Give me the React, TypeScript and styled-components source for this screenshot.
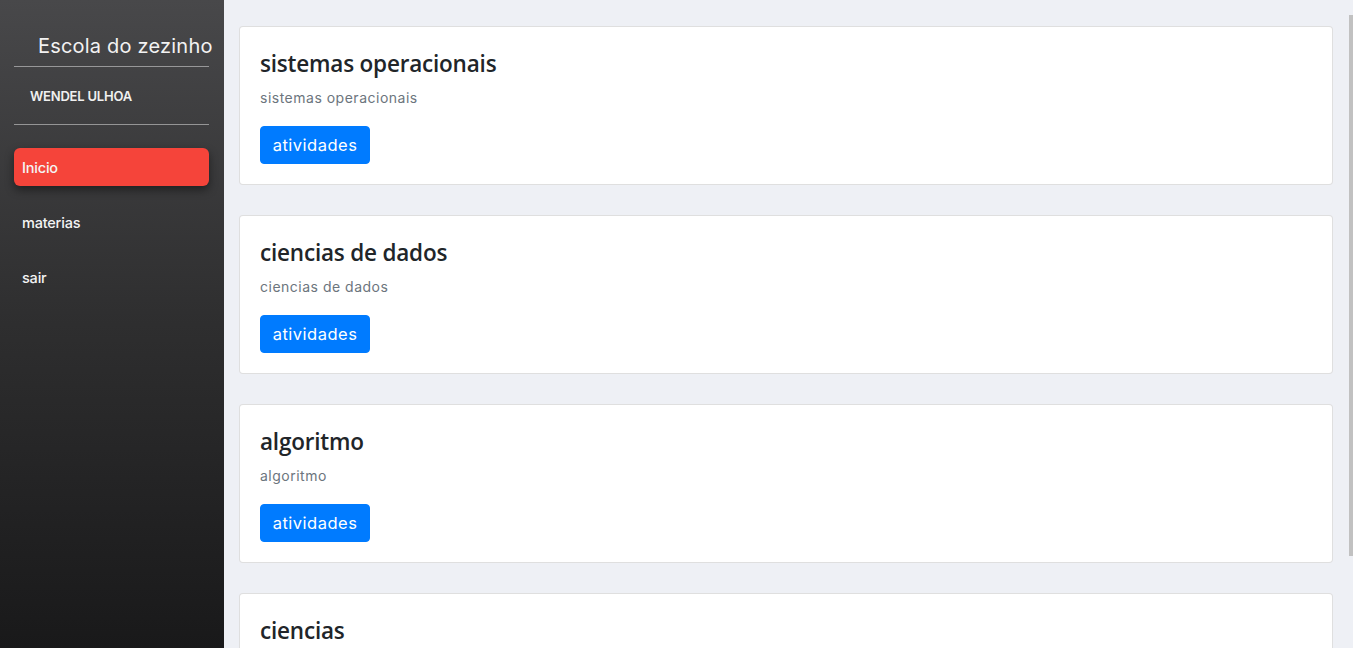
import React from "react";
import styled, { createGlobalStyle } from "styled-components";

const Global = createGlobalStyle`
  html, body { margin: 0; padding: 0; height: 100%; }
  body { font-family: "Inter", "Open Sans", sans-serif; background: #eef0f5; overflow: hidden; }
  #root { height: 100%; }
`;

const Shell = styled.div`
  display: flex;
  height: 100vh;
`;

const Sidebar = styled.aside`
  width: 224px;
  flex-shrink: 0;
  background: linear-gradient(to bottom, #48484a 0%, #2e2e2f 50%, #19191a 100%);
  padding: 0 15px 0 14px;
  box-sizing: border-box;
  display: flex;
  flex-direction: column;
`;

const Brand = styled.h1`
  margin: 0;
  padding: 33px 0 0 24px;
  height: 66px;
  box-sizing: border-box;
  font-family: "Inter", sans-serif;
  font-weight: 400;
  font-size: 20px;
  letter-spacing: 0.2px;
  line-height: 26px;
  color: #f2f2f2;
  white-space: nowrap;
`;

const Rule = styled.hr`
  margin: 0;
  border: 0;
  height: 1px;
  background: rgba(255, 255, 255, 0.45);
`;

const User = styled.div`
  height: 57px;
  display: flex;
  align-items: center;
  padding-left: 16px;
  font-size: 13px;
  font-weight: 600;
  color: #f0f0f0;
  letter-spacing: -0.2px;
`;

const Nav = styled.nav`
  display: flex;
  flex-direction: column;
  gap: 17px;
  margin-top: 23px;
`;

const NavItem = styled.a<{ $active?: boolean }>`
  display: flex;
  align-items: center;
  height: 38px;
  padding-left: 8px;
  border-radius: 6px;
  font-size: 14.5px;
  font-weight: 500;
  letter-spacing: -0.2px;
  color: #f4f4f4;
  text-decoration: none;
  background: ${(p) => (p.$active ? "#f5443a" : "transparent")};
  box-shadow: ${(p) => (p.$active ? "0 4px 10px rgba(0,0,0,0.45)" : "none")};
`;

const MainArea = styled.div`
  flex: 1;
  position: relative;
  min-width: 0;
`;

const Main = styled.main`
  height: 100%;
  overflow-y: auto;
  padding: 26px 20px 30px 15px;
  box-sizing: border-box;
  display: flex;
  flex-direction: column;
  gap: 30px;
  scrollbar-width: none;
  &::-webkit-scrollbar { display: none; }
`;

const ScrollThumb = styled.div`
  position: absolute;
  right: 0;
  top: 15px;
  width: 4px;
  height: 541px;
  background: #c1c1c1;
`;

const Card = styled.section`
  flex-shrink: 0;
  background: #fff;
  border: 1px solid rgba(0, 0, 0, 0.125);
  border-radius: 4px;
  padding: 20px;
  height: 159px;
  box-sizing: border-box;
`;

const CardTitle = styled.h3`
  margin: 0 0 9px;
  padding-top: 2px;
  font-family: "Open Sans", sans-serif;
  font-weight: 600;
  font-size: 22.5px;
  line-height: 1.3;
  letter-spacing: -0.2px;
  color: #212529;
`;

const CardText = styled.p`
  margin: 0 0 18px;
  font-size: 14px;
  line-height: 21px;
  letter-spacing: 0.5px;
  color: #6c757d;
`;

const Button = styled.button`
  font-family: "Inter", sans-serif;
  font-size: 16.5px;
  line-height: 24px;
  letter-spacing: 0.5px;
  padding: 6px 0;
  width: 110px;
  border: 1px solid #007bff;
  background: #007bff;
  color: #fff;
  border-radius: 4px;
  cursor: pointer;
`;

const subjects = ["sistemas operacionais", "ciencias de dados", "algoritmo", "ciencias"];

export default function App() {
  return (
    <>
      <Global />
      <Shell>
        <Sidebar>
          <Brand>Escola do zezinho</Brand>
          <Rule />
          <User>WENDEL ULHOA</User>
          <Rule />
          <Nav>
            <NavItem $active href="#">Inicio</NavItem>
            <NavItem href="#">materias</NavItem>
            <NavItem href="#">sair</NavItem>
          </Nav>
        </Sidebar>
        <MainArea>
          <Main>
            {subjects.map((s) => (
              <Card key={s}>
                <CardTitle>{s}</CardTitle>
                <CardText>{s}</CardText>
                <Button>atividades</Button>
              </Card>
            ))}
          </Main>
          <ScrollThumb />
        </MainArea>
      </Shell>
    </>
  );
}
